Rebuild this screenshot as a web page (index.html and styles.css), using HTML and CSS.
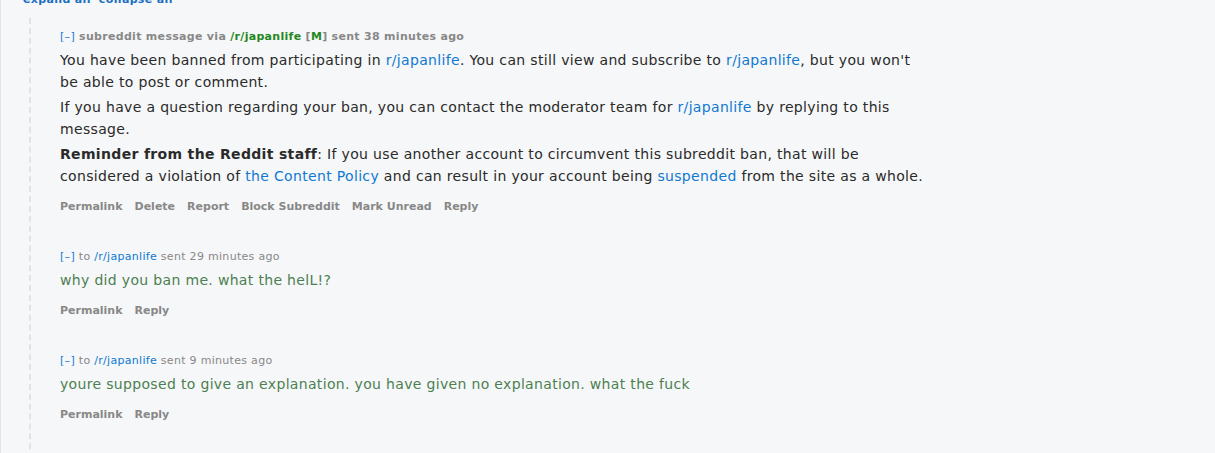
FILE: index.html
```html
<!DOCTYPE html>
<html>
<head>
<meta charset="utf-8">
<link rel="stylesheet" href="styles.css">
</head>
<body>
<div class="page">
  <div class="menu"><a class="menu-link">expand all</a><a class="menu-link">collapse all</a></div>
  <div class="thread">
    <div class="message">
      <div class="tagline bold"><a class="toggle">[–]</a> subreddit message via <a class="sub">/r/japanlife</a> <span class="modtag">[<b class="m">M</b>]</span> sent 38 minutes ago</div>
      <div class="md">
        <p>You have been banned from participating in <a class="lnk">r/japanlife</a>. You can still view and subscribe to <a class="lnk">r/japanlife</a>, but you won't be able to post or comment.</p>
        <p>If you have a question regarding your ban, you can contact the moderator team for <a class="lnk">r/japanlife</a> by replying to this message.</p>
        <p><strong>Reminder from the Reddit staff</strong>: If you use another account to circumvent this subreddit ban, that will be considered a violation of <a class="lnk">the Content Policy</a> and can result in your account being <a class="lnk">suspended</a> from the site as a whole.</p>
      </div>
      <ul class="buttons"><li>Permalink</li><li>Delete</li><li>Report</li><li>Block Subreddit</li><li>Mark Unread</li><li>Reply</li></ul>
    </div>
    <div class="message">
      <div class="tagline"><a class="toggle">[–]</a> to <a class="lnk">/r/japanlife</a> sent 29 minutes ago</div>
      <div class="md sent"><p>why did you ban me. what the helL!?</p></div>
      <ul class="buttons"><li>Permalink</li><li>Reply</li></ul>
    </div>
    <div class="message">
      <div class="tagline"><a class="toggle">[–]</a> to <a class="lnk">/r/japanlife</a> sent 9 minutes ago</div>
      <div class="md sent"><p>youre supposed to give an explanation. you have given no explanation. what the fuck</p></div>
      <ul class="buttons"><li>Permalink</li><li>Reply</li></ul>
    </div>
  </div>
</div>
</body>
</html>
```

FILE: styles.css
```css
html, body {
  margin: 0;
  padding: 0;
  background: #f6f7f8;
  height: 100%;
  overflow: hidden;
}
body {
  font-family: "DejaVu Sans", Verdana, sans-serif;
  color: #222;
}
.page {
  border-left: 1px solid #e3e5e8;
  min-height: 100%;
  padding-left: 22px;
}
.menu {
  margin-top: -7px;
  height: 14px;
  font-size: 11px;
  letter-spacing: 0.35px;
  font-weight: bold;
  display: flex;
  gap: 8px;
}
.menu-link { color: #1d6fc2; }
.thread {
  margin-top: 11px;
  margin-left: 6px;
  border-left: 2px dashed #e1e3e6;
  padding-left: 29px;
  padding-top: 11px;
  min-height: 440px;
}
.message { margin-bottom: 34px; }
.tagline {
  font-size: 11px;
  letter-spacing: 0.3px;
  color: #888;
  line-height: 16px;
}
.tagline.bold { font-weight: bold; letter-spacing: 0.3px; }
.toggle { color: #1a7ad8; font-weight: normal; }
.sub { color: #228822; }
.modtag { color: #888; }
.m { color: #228822; }
.lnk { color: #0f79d2; }
.md {
  font-size: 14px;
  letter-spacing: 0.33px;
  line-height: 22px;
  color: #2a2a2a;
  max-width: 868px;
  margin-top: 4px;
}
.md p { margin: 0 0 3px 0; }
.md strong { font-weight: bold; }
.md.sent { color: #4d7f52; }
.buttons {
  list-style: none;
  margin: 12px 0 0 0;
  padding: 0;
  display: flex;
  gap: 12px;
  font-size: 11px;
  font-weight: bold;
  color: #888;
  line-height: 16px;
}
```
